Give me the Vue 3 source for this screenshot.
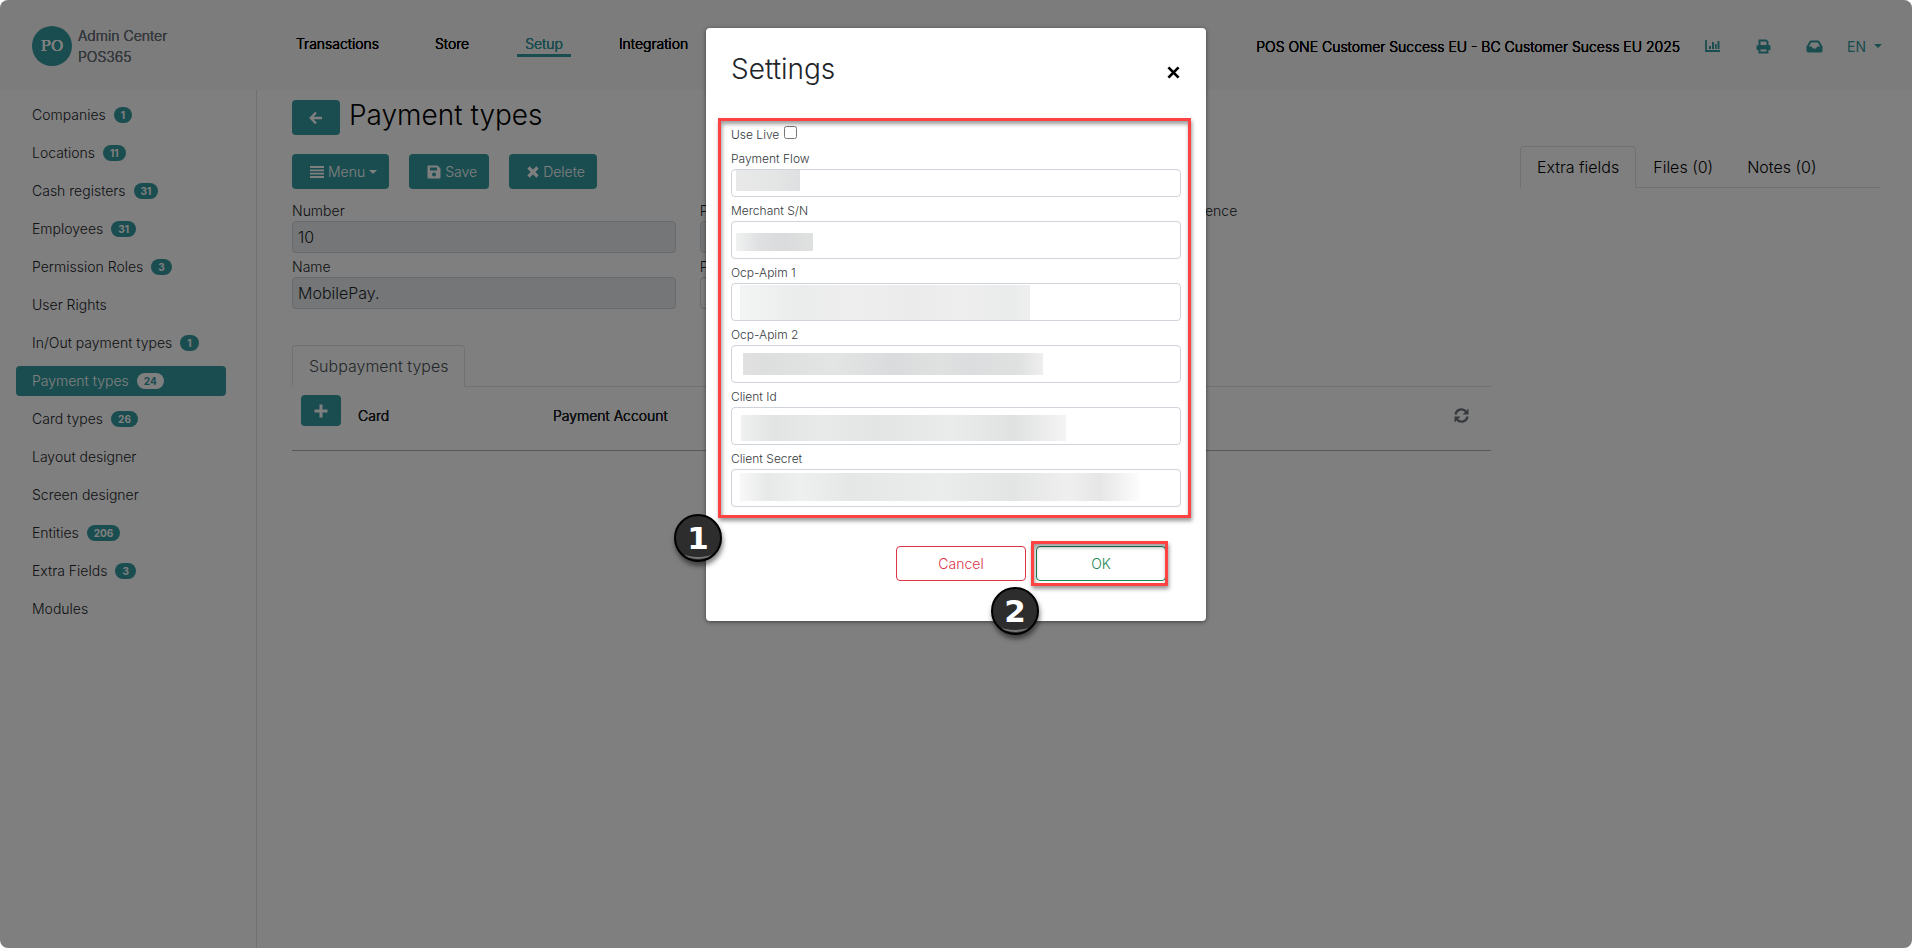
<script setup>
import { ref } from 'vue'

const navItems = ['Transactions', 'Store', 'Setup', 'Integration']
const activeNav = ref('Setup')

const menuItems = [
    { name: 'Companies', count: 1 },
    { name: 'Locations', count: 11 },
    { name: 'Cash registers', count: 31 },
    { name: 'Employees', count: 31 },
    { name: 'Permission Roles', count: 3 },
    { name: 'User Rights' },
    { name: 'In/Out payment types', count: 1 },
    { name: 'Payment types', count: 24 },
    { name: 'Card types', count: 26 },
    { name: 'Layout designer' },
    { name: 'Screen designer' },
    { name: 'Entities', count: 206 },
    { name: 'Extra Fields', count: 3 },
    { name: 'Modules' }
]
const activeMenu = ref('Payment types')

const fields = [
    { id: 'number', label: 'Number', type: 'text', value: '10', disabled: true },
    { id: 'payment-group', label: 'P', type: 'text', value: '', disabled: true },
    { id: 'reference', label: 'Customer reference', type: 'checkbox', disabled: false },
    { id: 'name', label: 'Name', type: 'text', value: 'MobilePay.', disabled: true },
    { id: 'payment-account', label: 'P', type: 'text', value: '', disabled: false }
]

const sideTabs = ['Extra fields', 'Files (0)', 'Notes (0)']
const activeTab = ref('Extra fields')

const useLive = ref(false)
const settings = [
    { id: 'flow', label: 'Payment Flow' },
    { id: 'merchant', label: 'Merchant S/N' },
    { id: 'apim1', label: 'Ocp-Apim 1' },
    { id: 'apim2', label: 'Ocp-Apim 2' },
    { id: 'client-id', label: 'Client Id' },
    { id: 'client-secret', label: 'Client Secret' }
]
</script>

<template>
    <div class="page">
        <header class="header">
            <a class="brand" href="#">
                <span class="logo">PO</span>
                <span>Admin Center<br>POS365</span>
            </a>
            <nav class="nav">
                <a v-for="el in navItems" :key="el" href="#" :class="{ active: activeNav === el }" @click.prevent="activeNav = el">{{ el }}</a>
            </nav>
            <div class="tools">
                <span class="company">POS ONE Customer Success EU - BC Customer Sucess EU 2025</span>
                <button class="tool" aria-label="Reports">
                    <svg width="16" height="14" viewBox="0 0 16 14">
                        <path d="M1 1v11h14" fill="none" stroke="currentColor" stroke-width="1.8" />
                        <path d="M4 7h2v3H4zM7 3h2v7H7zM10 5h1.600v5H10zM12.500 2h2v8h-2z" fill="currentColor" />
                    </svg>
                </button>
                <button class="tool" aria-label="Print">
                    <svg width="15" height="15" viewBox="0 0 15 15">
                        <path d="M3.500 6V1.500h6.500l1.500 1.500v3" fill="none" stroke="currentColor" stroke-width="2" />
                        <path d="M2 6h11a1.500 1.500 0 0 1 1.500 1.500V11H.5V7.500A1.500 1.500 0 0 1 2 6z" fill="currentColor" />
                        <path class="paper" d="M3.500 9.500h8v4h-8z" stroke="currentColor" stroke-width="2" />
                    </svg>
                </button>
                <button class="tool" aria-label="Inbox">
                    <svg width="17" height="13" viewBox="0 0 17 13">
                        <path d="M4.300 1h8.400L16 6.500V11a1 1 0 0 1-1 1H2a1 1 0 0 1-1-1V6.500z" fill="currentColor" stroke="currentColor" stroke-width="1" stroke-linejoin="round" />
                        <path class="tray" d="M5.200 2.600h6.600l2.300 4h-2.800l-1.300 2H7l-1.300-2H2.900z" />
                    </svg>
                </button>
                <button class="lang">EN <span class="caret"></span></button>
            </div>
        </header>

        <div class="body">
            <aside class="sidebar">
                <a v-for="el in menuItems" :key="el.name" href="#" :class="{ active: activeMenu === el.name }" @click.prevent="activeMenu = el.name">
                    {{ el.name }}
                    <span v-if="el.count" class="count">{{ el.count }}</span>
                </a>
            </aside>

            <main class="main">
                <section class="content">
                    <div class="title">
                        <button class="btn back" aria-label="Back">
                            <svg width="14" height="14" viewBox="0 0 14 14">
                                <path d="M7 1.500L1.800 7 7 12.500M2 7h11" fill="none" stroke="currentColor" stroke-width="2.400" />
                            </svg>
                        </button>
                        <h1>Payment types</h1>
                    </div>
                    <div class="actions">
                        <button class="btn">
                            <svg width="14" height="12" viewBox="0 0 14 12">
                                <path d="M0 1h14M0 4.300h14M0 7.700h14M0 11h14" stroke="currentColor" stroke-width="1.800" />
                            </svg>
                            Menu <span class="caret"></span>
                        </button>
                        <button class="btn">
                            <svg width="14" height="14" viewBox="0 0 14 14">
                                <path d="M1.500.5h9L13.500 3.500v9a1 1 0 0 1-1 1h-11a1 1 0 0 1-1-1v-11a1 1 0 0 1 1-1zM3 2.500v3h7v-3zM7 7.500a2 2 0 1 0 .1 0z" fill="currentColor" fill-rule="evenodd" />
                            </svg>
                            Save
                        </button>
                        <button class="btn">
                            <svg width="12" height="12" viewBox="0 0 12 12">
                                <path d="M1.500 1.500l9 9M10.500 1.500l-9 9" stroke="currentColor" stroke-width="3.200" />
                            </svg>
                            Delete
                        </button>
                    </div>

                    <div class="fields">
                        <div v-for="el in fields" :key="el.id" class="field">
                            <label :for="el.id">{{ el.label }}</label>
                            <input :id="el.id" :type="el.type" :value="el.value" :disabled="el.disabled">
                        </div>
                    </div>

                    <div class="tabs sub">
                        <button class="active">Subpayment types</button>
                    </div>
                    <table class="table">
                        <thead>
                            <tr>
                                <th class="add">
                                    <button class="btn plus" aria-label="Add">
                                        <svg width="14" height="14" viewBox="0 0 14 14">
                                            <path d="M7 .5v13M.5 7h13" stroke="currentColor" stroke-width="3" />
                                        </svg>
                                    </button>
                                </th>
                                <th class="card">Card</th>
                                <th>Payment Account</th>
                                <th class="reload">
                                    <button aria-label="Refresh">
                                        <svg width="15" height="15" viewBox="0 0 15 15">
                                            <path d="M1.500 6.500A6 6 0 0 1 12 3.500M13.500 8.500A6 6 0 0 1 3 11.500" fill="none" stroke="currentColor" stroke-width="2.200" />
                                            <path d="M14.500.5v6h-6zM.5 14.500v-6h6z" fill="currentColor" />
                                        </svg>
                                    </button>
                                </th>
                            </tr>
                        </thead>
                    </table>
                </section>

                <section class="side">
                    <div class="tabs">
                        <button v-for="el in sideTabs" :key="el" :class="{ active: activeTab === el }" @click="activeTab = el">{{ el }}</button>
                    </div>
                </section>
            </main>
        </div>

        <div class="backdrop">
            <div class="modal" role="dialog" aria-labelledby="modal-title">
                <div class="modal-head">
                    <h2 id="modal-title">Settings</h2>
                    <button class="close" aria-label="Close">
                        <svg width="13" height="13" viewBox="0 0 12 12">
                            <path d="M1.300 1.300l9.400 9.400M10.700 1.300l-9.400 9.400" stroke="currentColor" stroke-width="2.500" />
                        </svg>
                    </button>
                </div>
                <div class="form">
                    <div class="check">
                        <label for="use-live">Use Live</label>
                        <input id="use-live" v-model="useLive" type="checkbox">
                    </div>
                    <div v-for="el in settings" :key="el.id" class="setting">
                        <label :for="el.id">{{ el.label }}</label>
                        <input :id="el.id" type="text" :class="el.id" autocomplete="off">
                    </div>
                    <span class="frame"></span>
                    <span class="step">1</span>
                </div>
                <div class="modal-foot">
                    <button class="cancel">Cancel</button>
                    <div class="ok-box">
                        <button class="ok">OK</button>
                        <span class="frame"></span>
                        <span class="step">2</span>
                    </div>
                </div>
            </div>
        </div>
    </div>
</template>

<style>
body {
    margin: 0;
    background: #fff;
}
</style>

<style scoped>
.page {
    position: relative;
    display: flex;
    flex-direction: column;
    min-height: 100vh;
    overflow: hidden;
    border-radius: 8px;
    background: #fff;
    color: #212529;
    font-family: Inter, "Liberation Sans", sans-serif;
    font-size: 14px;
    font-weight: 300;
    line-height: 21px;
}

.page * {
    box-sizing: border-box;
}

a {
    color: inherit;
    text-decoration: none;
}

button {
    margin: 0;
    padding: 0;
    border: 0;
    background: none;
    color: inherit;
    font: inherit;
    cursor: pointer;
}

svg {
    display: block;
    flex: none;
}

h1,
h2 {
    margin: 0;
    font-size: 28px;
    font-weight: 300;
    line-height: 34px;
}

h1 {
    line-height: 31px;
}

.caret {
    display: inline-block;
    border: 4px solid transparent;
    border-top-color: currentColor;
    border-bottom: 0;
}

/* header */

.header {
    display: flex;
    align-items: center;
    height: 90px;
    padding: 2px 32px 0;
    background: #f8f8f8;
}

.brand {
    display: flex;
    align-items: center;
    gap: 6px;
    width: 256px;
    color: #6c757d;
}

.logo {
    width: 40px;
    border-radius: 50%;
    background: #349aa0;
    color: #fff;
    font-family: "DejaVu Serif", serif;
    font-size: 15px;
    line-height: 40px;
    text-align: center;
}

/* the shadows thicken the strokes without widening the text */
.brand,
.nav,
.company,
.table th {
    font-weight: 300;
    text-shadow: 0 0 currentColor, 0 0 currentColor, 0 0 currentColor;
}

.nav {
    display: flex;
    gap: 40px;
    margin-bottom: 2px;
    color: #000;
}

.nav a {
    padding: 0 8px;
    border-bottom: 3px solid transparent;
}

.nav .active {
    border-color: #349aa0;
    color: #349aa0;
}

.tools {
    display: flex;
    align-items: center;
    margin-left: auto;
    color: #349aa0;
}

.company {
    margin-right: 25px;
    color: #000;
}

.tool {
    margin-right: 35px;
}

.tool:nth-of-type(3) {
    margin-right: 24px;
}

.paper,
.tray {
    fill: #f8f8f8;
}

.lang {
    display: flex;
    align-items: center;
    gap: 8px;
    margin-right: -2px;
    font-weight: 400;
}

/* sidebar */

.body {
    display: flex;
    flex: 1;
}

.sidebar {
    display: flex;
    flex-direction: column;
    gap: 8px;
    width: 257px;
    padding: 10px 30px 10px 16px;
    border-right: 1px solid #dee2e6;
}

.sidebar a {
    display: flex;
    align-items: center;
    gap: 8px;
    height: 30px;
    padding: 0 16px 1px;
    border-radius: 4px;
}

.sidebar .active {
    background: #349aa0;
    color: #fff;
}

.count {
    padding: 3px 7px;
    border-radius: 8px;
    background: #349aa0;
    color: #fff;
    font-size: 10px;
    font-weight: 700;
    line-height: 10px;
}

.active .count {
    background: #fff;
    color: #349aa0;
}

/* content */

.main {
    display: flex;
    flex: 1;
    align-items: flex-start;
    gap: 29px;
    padding: 10px 32px 0 35px;
}

.content {
    flex: 1;
}

.title {
    display: flex;
    gap: 9px;
    margin-bottom: 19px;
    color: #000;
}

.actions {
    display: flex;
    gap: 20px;
    margin-bottom: 11px;
}

.btn {
    display: flex;
    align-items: center;
    gap: 4px;
    height: 35px;
    padding: 0 12px 0 18px;
    border-radius: 4px;
    background: #349aa0;
    color: #fff;
}

.back {
    padding: 0 17px;
}

.fields {
    display: grid;
    grid-template-columns: repeat(3, 1fr);
    gap: 3px 24px;
    margin-bottom: 36px;
}

.field label,
.field input[type="text"] {
    display: block;
    width: 100%;
}

input {
    border: 1px solid #ced4da;
    border-radius: 4px;
    background: #fff;
    color: #212529;
    font-family: inherit;
    font-weight: inherit;
}

.field input[type="text"] {
    height: 32px;
    padding: 0 5px;
    font-size: 16px;
}

.field input:disabled {
    background: #e9ecef;
}

.tabs {
    display: flex;
    border-bottom: 1px solid #dee2e6;
    color: #000;
    font-size: 16px;
}

.tabs button {
    height: 42px;
    margin-bottom: -1px;
    padding: 0 16px;
    border: 1px solid transparent;
}

.tabs .active {
    border-color: #dee2e6;
    border-bottom-color: #fff;
    border-radius: 4px 4px 0 0;
    background: #fff;
}

.sub {
    color: #495057;
}

.table {
    width: 100%;
    border-collapse: collapse;
    border-bottom: 1px solid #adb0b3;
    table-layout: fixed;
}

.table th {
    height: 63px;
    padding: 0 0 6px;
    color: #212529;
    text-align: left;
}

.table .add {
    width: 66px;
    padding: 8px 9px;
    vertical-align: top;
}

.table .card {
    width: 195px;
}

.plus {
    justify-content: center;
    width: 40px;
    height: 31px;
    padding: 0;
}

.table .reload {
    width: 37px;
    padding-bottom: 2px;
    color: #6c757d;
}

.side {
    width: 360px;
    padding-top: 46px;
}

/* modal */

.backdrop {
    position: absolute;
    inset: 0;
    padding: 28px 0;
    background: rgba(0, 0, 0, 0.5);
}

.modal {
    width: 500px;
    margin: 0 auto;
    padding: 24px 25px 40px;
    border-radius: 4px;
    background: #fff;
    box-shadow: 0 1px 4px rgba(0, 0, 0, 0.5);
}

.modal-head {
    display: flex;
    align-items: center;
    justify-content: space-between;
    margin-bottom: 38px;
}

.close {
    padding: 6px 1px 0;
    color: #000;
}

.form {
    position: relative;
    color: #343a40;
    font-size: 12px;
}

.check {
    display: flex;
    gap: 5px;
    height: 25px;
}

.check input {
    width: 13px;
    height: 13px;
    margin: 2px 0;
}

.setting {
    padding-bottom: 4px;
}

.setting label,
.setting input {
    display: block;
    width: 100%;
}

.setting label {
    line-height: 20px;
}

.setting input {
    height: 38px;
    padding: 0 12px;
    font-size: 14px;
    background-repeat: no-repeat;
}

.setting .flow {
    height: 28px;
    background-image: linear-gradient(100deg, #e9e9ea, #e4e5e5 60%, #dedfe0);
    background-position: 4px 0;
    background-size: 64px 21px;
}

.setting .merchant {
    background-image: linear-gradient(90deg, #f0f1f1, #dfe0e1 30%, #dadbdc 60%, #dfe0e0);
    background-position: 4px 11px;
    background-size: 77px 18px;
}

.setting .apim1 {
    background-image: linear-gradient(90deg, #f3f4f4, #ebecec 20%, #eeeeee 40%, #ebebeb 60%, #eeeeee 75%, #eaebeb 93%, #eeeeee);
    background-position: 8px 1px;
    background-size: 290px 35px;
}

.setting .apim2 {
    background-image: linear-gradient(90deg, #e1e1e2, #dddede 8%, #e3e4e4 30%, #dadbdc 50%, #dfe0e0 65%, #dcddde 75%, #dfe0e0 92%, #efefef);
    background-position: 11px 7px;
    background-size: 300px 22px;
}

.setting .client-id {
    background-image: linear-gradient(90deg, #eff0f0, #e2e3e3 10%, #e8e9e9 25%, #e3e4e4 42%, #eaebeb 65%, #e0e1e1 84%, #f4f4f4);
    background-position: 9px 7px;
    background-size: 325px 26px;
}

.setting .client-secret {
    background-image: linear-gradient(90deg, #f8f8f8, #e7e8e8 7%, #eeefef 15%, #e5e6e6 28%, #ebecec 50%, #e3e4e4 68%, #efefef 82%, #e6e6e6 90%, #fdfdfd);
    background-position: 8px 3px;
    background-size: 400px 28px;
}

.modal-foot {
    display: flex;
    justify-content: flex-end;
    gap: 10px;
    padding: 35px 15px 0 0;
}

.cancel,
.ok {
    width: 130px;
    height: 35px;
    border: 1px solid #dc3545;
    border-radius: 4px;
    color: #dc3545;
}

.ok {
    border-color: #198754;
    color: #198754;
}

.ok-box {
    position: relative;
}

/* step callouts */

.frame {
    position: absolute;
    inset: -6px -10px -7px -13px;
    border: 3px solid #ff4343;
    box-shadow: 1px 3px 4px rgba(0, 0, 0, 0.4), inset 1px 3px 4px rgba(0, 0, 0, 0.4);
    pointer-events: none;
}

.ok-box .frame {
    inset: -5px -2px -5px -5px;
}

.step {
    position: absolute;
    bottom: -51px;
    left: -57px;
    width: 48px;
    height: 48px;
    border: 2px solid #000;
    border-radius: 50%;
    background: #2d2d2d;
    box-shadow: 1px 4px 5px rgba(0, 0, 0, 0.5);
    color: #fff;
    font-family: "DejaVu Sans", sans-serif;
    font-size: 31px;
    font-weight: 700;
    line-height: 44px;
    text-align: center;
}

.ok-box .step {
    bottom: -54px;
    left: -45px;
}

.step::after {
    content: "";
    position: absolute;
    right: 9px;
    bottom: 1px;
    left: 9px;
    height: 8px;
    border-bottom: 2px solid #777;
    border-radius: 50%;
}
</style>
